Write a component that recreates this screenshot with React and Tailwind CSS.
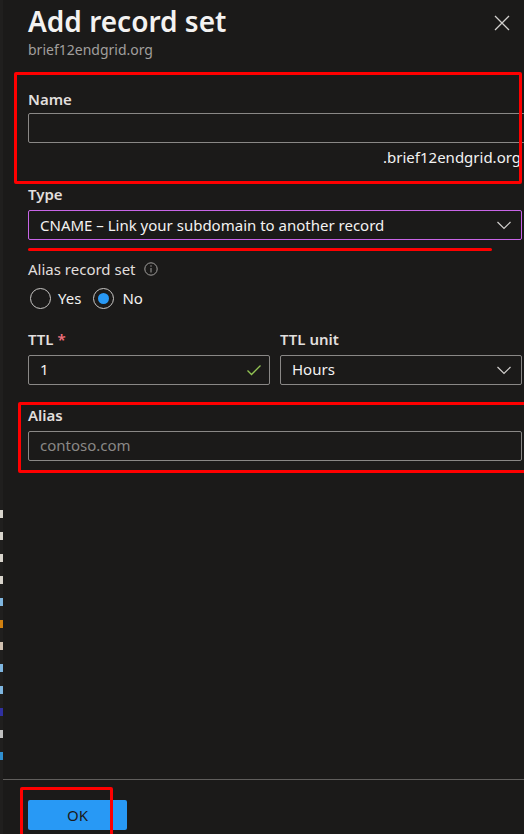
import React from "react";

function Chevron() {
  return (
    <svg width="16" height="16" viewBox="0 0 16 16" fill="none">
      <path d="M1.5 5 L8 11.5 L14.5 5" stroke="#d2d0ce" strokeWidth="1.2" />
    </svg>
  );
}

function Label({ children, className = "" }) {
  return <div className={`text-[15px] font-semibold text-[#e1dfdd] leading-[20px] ${className}`}>{children}</div>;
}

export default function App() {
  const marks = ["#d8d4cc", "#d8d4cc", "#d8d4cc", "#d8d4cc", "#7fb6e0", "#d08010", "#d0c0b0", "#7fb6e0", "#7fb6e0", "#3030a0", "#c0c0c0", "#2f8fd0"];

  return (
    <div className="relative w-[524px] h-[834px] overflow-hidden bg-[#1b1a19] flex font-['Noto_Sans',sans-serif] text-[#f3f2f1]">
      {/* sliver of the page behind the blade */}
      <div className="w-[3px] bg-[#201f1e] flex flex-col pt-[510px] gap-[14px]">
        {marks.map((c, i) => (
          <div key={i} className="h-[8px] w-[3px]" style={{ backgroundColor: c }} />
        ))}
      </div>

      <div className="flex-1 flex flex-col min-w-0">
        <div className="flex-1 pl-[25px] pr-[2px]">
          {/* header */}
          <div className="flex items-start justify-between pr-[12px]">
            <div>
              <h1 className="text-[28px] font-semibold leading-[36px] mt-[3px] text-[#f3f2f1]">Add record set</h1>
              <div className="text-[14px] text-[#a19f9d] leading-[18px] mt-[2px]">brief12endgrid.org</div>
            </div>
            <svg width="16" height="16" viewBox="0 0 16 16" className="mt-[15px]">
              <path d="M1 1 L15 15 M15 1 L1 15" stroke="#d2d0ce" strokeWidth="1.3" />
            </svg>
          </div>

          {/* Name */}
          <Label className="mt-[30px]">Name</Label>
          <div className="mt-[4px] h-[30px] w-[520px] border border-[#8a8886] rounded-[2px]" />
          <div className="mt-[4px] text-right text-[15px] leading-[20px] pr-[1px]">.brief12endgrid.org</div>

          {/* Type */}
          <Label className="mt-[17px]">Type</Label>
          <div className="mt-[6px] h-[30px] border border-[#c865e7] rounded-[2px] flex items-center justify-between pl-[11px] pr-[9px]">
            <span className="text-[15px]">CNAME – Link your subdomain to another record</span>
            <Chevron />
          </div>

          {/* Alias record set */}
          <div className="mt-[19px] flex items-center gap-[8px]">
            <span className="text-[15px] text-[#e1dfdd] leading-[20px]">Alias record set</span>
            <svg width="14" height="14" viewBox="0 0 14 14" fill="none">
              <circle cx="7" cy="7" r="6.2" stroke="#a19f9d" strokeWidth="1" />
              <path d="M7 6 V10.5" stroke="#a19f9d" strokeWidth="1" />
              <circle cx="7" cy="4" r="0.7" fill="#a19f9d" />
            </svg>
          </div>
          <div className="mt-[8px] flex items-center">
            <div className="ml-[2px] w-[21px] h-[21px] rounded-full border border-[#c8c6c4]" />
            <span className="ml-[7px] text-[15px]">Yes</span>
            <div className="ml-[12px] w-[21px] h-[21px] rounded-full border border-[#c8c6c4] flex items-center justify-center">
              <div className="w-[11px] h-[11px] rounded-full bg-[#2899f5]" />
            </div>
            <span className="ml-[8px] text-[15px]">No</span>
          </div>

          {/* TTL */}
          <div className="mt-[19px] grid grid-cols-2 gap-x-[10px]">
            <div>
              <Label>TTL <span className="text-[#f1707b]">*</span></Label>
              <div className="mt-[6px] h-[30px] border border-[#8a8886] rounded-[2px] flex items-center justify-between pl-[11px] pr-[7px]">
                <span className="text-[15px]">1</span>
                <svg width="16" height="16" viewBox="0 0 16 16" fill="none">
                  <path d="M1.5 8.5 L5.5 12.5 L14.5 3.5" stroke="#92c353" strokeWidth="1.3" />
                </svg>
              </div>
            </div>
            <div>
              <Label>TTL unit</Label>
              <div className="mt-[6px] h-[30px] border border-[#8a8886] rounded-[2px] flex items-center justify-between pl-[11px] pr-[9px]">
                <span className="text-[15px]">Hours</span>
                <Chevron />
              </div>
            </div>
          </div>

          {/* Alias */}
          <Label className="mt-[20px]">Alias</Label>
          <div className="mt-[6px] h-[30px] border border-[#8a8886] rounded-[2px] flex items-center pl-[11px]">
            <span className="text-[15px] text-[#8a8886]">contoso.com</span>
          </div>
        </div>

        {/* footer */}
        <div className="border-t border-[#605e5c] h-[55px] pl-[25px] pt-[20px]">
          <button className="w-[99px] h-[30px] rounded-[2px] bg-[#2899f5] text-[15px] text-[#1b1a19]">OK</button>
        </div>
      </div>

      {/* red annotation marks */}
      <div className="absolute left-[14px] top-[72px] w-[508px] h-[112px] border-[3px] border-[#ff0000] rounded-[2px]" />
      <div className="absolute left-[28px] top-[248px] w-[464px] h-[3px] bg-[#ff0000] rounded-full" />
      <div className="absolute left-[18px] top-[402px] w-[510px] h-[71px] border-[3px] border-[#ff0000] rounded-[2px]" />
      <div className="absolute left-[20px] top-[787px] w-[93px] h-[60px] border-[3px] border-[#ff0000] rounded-[2px]" />
    </div>
  );
}
